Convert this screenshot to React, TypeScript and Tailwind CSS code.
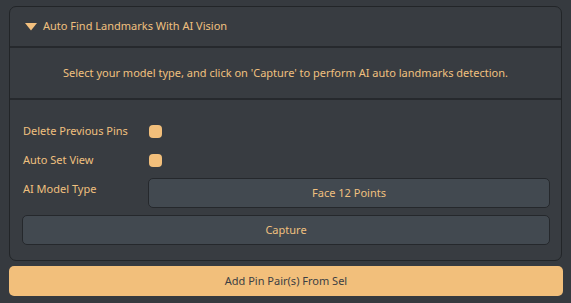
import React from "react";

export default function App() {
  const font = { fontFamily: '"Noto Sans", "Open Sans", sans-serif' };
  return (
    <div className="w-[571px] h-[303px] bg-[#363a3f] pt-[6px] px-[9px] text-[11px]" style={font}>
      <div className="w-[553px] h-[255px] rounded-[7px] border border-[#222528] bg-[#383c41] flex flex-col">
        <div className="h-[41px] flex items-center pl-[15px] gap-[6px] border-b-2 border-[#26292d]">
          <svg width="12" height="8" viewBox="0 0 12 8">
            <polygon points="0,0 12,0 6,7.5" fill="#f3c07e" />
          </svg>
          <span className="text-[#f0c07f]">Auto Find Landmarks With AI Vision</span>
        </div>
        <div className="h-[52px] flex items-center justify-center border-b-2 border-[#26292d] text-[#f0c07f]">
          Select your model type, and click on 'Capture' to perform AI auto landmarks detection.
        </div>
        <div className="flex flex-col pl-[13px] pr-[11px] pt-[17px]">
          <div className="h-[29px] flex items-center">
            <span className="w-[126px] text-[#f0c07f]">Delete Previous Pins</span>
            <span className="w-[13px] h-[13px] rounded-[4px] bg-[#f2bf7b]" />
          </div>
          <div className="h-[29px] flex items-center">
            <span className="w-[126px] text-[#f0c07f]">Auto Set View</span>
            <span className="w-[13px] h-[13px] rounded-[4px] bg-[#f2bf7b]" />
          </div>
          <div className="h-[30px] flex items-start mt-[3px]">
            <span className="w-[125px] text-[#f0c07f] pt-[3px]">AI Model Type</span>
            <div className="flex-1 h-[30px] rounded-[5px] border border-[#25282c] bg-[#424950] flex items-center justify-center text-[#f0c07f]">
              Face 12 Points
            </div>
          </div>
          <div className="mt-[7px] -ml-[1px] h-[30px] rounded-[5px] border border-[#25282c] bg-[#424950] flex items-center justify-center text-[#f0c07f]">
            Capture
          </div>
        </div>
      </div>
      <div className="mt-[5px] w-[554px] h-[30px] rounded-[5px] bg-[#f2bf7b] flex items-center justify-center text-[#3b3e43]">
        Add Pin Pair(s) From Sel
      </div>
    </div>
  );
}
